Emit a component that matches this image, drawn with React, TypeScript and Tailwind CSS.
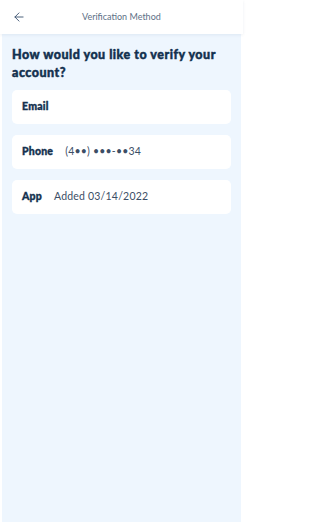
import { ArrowLeft } from 'lucide-react';

const methods = [
  { id: 'email', label: 'Email', detail: '' },
  { id: 'phone', label: 'Phone', detail: '(4••) •••-••34' },
  { id: 'app', label: 'App', detail: 'Added 03/14/2022' },
];

export default function App() {
  return (
    <div className="flex h-[526px] w-[243px] flex-col bg-white font-['Lato',sans-serif] text-[#13314f]">
      {/* Header */}
      <div className="relative z-10 flex h-[34px] items-center bg-white px-[12px] shadow-[0_1px_3px_rgba(30,60,100,0.08)]">
        <ArrowLeft className="h-[14px] w-[14px] text-[#3f5673]" strokeWidth={1.6} />
        <div className="ml-[56px] text-[9px] text-[#5d6f86]">Verification Method</div>
      </div>

      {/* Body */}
      <div className="mx-[2px] mb-[4px] flex flex-1 flex-col bg-[#eef6fe] px-[10px] pt-[12px]">
        <h1 className="text-[12.5px] font-black leading-[18px] tracking-[0.5px] [-webkit-text-stroke:0.45px_#13314f]">
          How would you like to verify your account?
        </h1>
        <div className="mt-[8px] flex flex-col gap-[11px]">
          {methods.map((m) => (
            <div
              key={m.id}
              className="flex h-[34px] items-center rounded-[5px] bg-white px-[10px] text-[10.5px]"
            >
              <span className="font-black tracking-[0.2px] [-webkit-text-stroke:0.35px_#13314f]">{m.label}</span>
              {m.detail && (
                <span className="ml-[12px] tracking-[0.2px] text-[#3c4e66]">{m.detail}</span>
              )}
            </div>
          ))}
        </div>
      </div>
    </div>
  );
}
